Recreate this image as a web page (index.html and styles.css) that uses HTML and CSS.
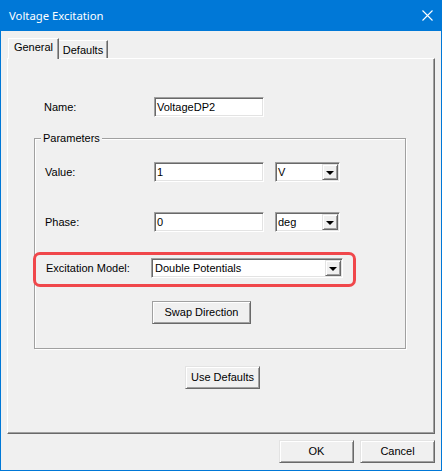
FILE: index.html
```html
<!DOCTYPE html>
<html>
<head>
<meta charset="utf-8">
<link rel="stylesheet" href="styles.css">
</head>
<body>
<div class="window">
  <div class="titlebar">
    <span class="title">Voltage Excitation</span>
    <svg class="close" width="11" height="11" viewBox="0 0 11 11"><path d="M0.5 0.5 L10.5 10.5 M10.5 0.5 L0.5 10.5" stroke="#fff" stroke-width="1.1" fill="none"/></svg>
  </div>
  <div class="content">
    <div class="tabs">
      <div class="tab active">General</div>
      <div class="tab">Defaults</div>
    </div>
    <div class="panel">
      <div class="row name-row">
        <span class="label">Name:</span>
        <div class="field">VoltageDP2</div>
      </div>
      <div class="group">
        <div class="group-title">Parameters</div>
        <div class="row value-row">
          <span class="label">Value:</span>
          <div class="field">1</div>
          <div class="combo unit"><span class="combo-text">V</span><span class="drop"><span class="arrow"></span></span></div>
        </div>
        <div class="row phase-row">
          <span class="label">Phase:</span>
          <div class="field">0</div>
          <div class="combo unit"><span class="combo-text">deg</span><span class="drop"><span class="arrow"></span></span></div>
        </div>
        <div class="highlight">
          <span class="label">Excitation Model:</span>
          <div class="combo model"><span class="combo-text">Double Potentials</span><span class="drop"><span class="arrow"></span></span></div>
        </div>
        <div class="btn swap">Swap Direction</div>
      </div>
      <div class="btn use-defaults">Use Defaults</div>
    </div>
    <div class="footer">
      <div class="btn">OK</div>
      <div class="btn">Cancel</div>
    </div>
  </div>
</div>
</body>
</html>
```
FILE: styles.css
```css
body {
  margin: 0;
  background: #fff;
  font-family: "Liberation Sans", Arial, sans-serif;
  font-size: 11px;
  color: #000;
}
.window {
  width: 442px;
  height: 471px;
  box-sizing: border-box;
  border: 1px solid #0078d7;
  border-top: 0;
  background: #f0f0f0;
}
.titlebar {
  height: 31px;
  background: #0078d7;
  color: #fff;
  display: flex;
  align-items: center;
  justify-content: space-between;
  padding: 0 8px 0 8px;
  font-family: "Noto Sans", "Liberation Sans", sans-serif;
  font-size: 11.3px;
}
.title { line-height: 16px; }
.close { display: block; }
.tabs {
  display: flex;
  align-items: flex-end;
  height: 20px;
  margin: 7px 0 0 7px;
}
.tab {
  box-sizing: border-box;
  background: #f0f0f0;
  text-align: center;
  border-top: 1px solid #fff;
  border-right: 1px solid #696969;
  box-shadow: inset -1px 0 0 #a0a0a0;
  width: 49px;
  height: 18px;
  padding-top: 1px;
  line-height: 16px;
}
.tab.active {
  position: relative;
  z-index: 1;
  width: 51px;
  height: 21px;
  margin-bottom: -1px;
  border-left: 1px solid #fff;
  padding-top: 0;
  line-height: 17px;
}
.panel {
  box-sizing: border-box;
  height: 376px;
  margin: 0 6px;
  border: 1px solid #696969;
  border-left-color: #fff;
  border-top-color: #fff;
  box-shadow: inset -1px -1px 0 #a0a0a0;
  display: flex;
  flex-direction: column;
  align-items: flex-start;
}
.row {
  display: flex;
  align-items: center;
}
.label { line-height: 14px; }
.name-row {
  margin: 38px 0 0 36px;
}
.name-row .label { width: 110px; }
.field {
  box-sizing: border-box;
  width: 110px;
  height: 20px;
  background: #fff;
  border: 1px solid;
  border-color: #a0a0a0 #fff #fff #a0a0a0;
  box-shadow: inset 1px 1px 0 #696969, inset -1px -1px 0 #e3e3e3;
  padding: 0 2px 0 2px;
  line-height: 18px;
}
.group {
  box-sizing: border-box;
  width: 372px;
  margin: 21px 0 0 26px;
  border: 1px solid #a0a0a0;
  box-shadow: 1px 1px 0 #fff, inset 1px 1px 0 #fff;
  padding: 0 0 24px 10px;
  display: flex;
  flex-direction: column;
  align-items: flex-start;
}
.group-title {
  margin: -7px 0 0 -4px;
  padding: 0 2px;
  background: #f0f0f0;
  line-height: 13px;
}
.value-row { margin-top: 17px; }
.phase-row { margin-top: 30px; }
.value-row .label, .phase-row .label { width: 109px; }
.combo {
  box-sizing: border-box;
  height: 20px;
  background: #fff;
  border: 1px solid;
  border-color: #a0a0a0 #fff #fff #a0a0a0;
  box-shadow: inset 1px 1px 0 #696969, inset -1px -1px 0 #e3e3e3;
  padding: 1px 1px 1px 2px;
  display: flex;
  align-items: center;
}
.combo.unit {
  width: 65px;
  margin-left: 11px;
}
.combo-text {
  flex: 1;
  line-height: 16px;
}
.drop {
  box-sizing: border-box;
  width: 16px;
  height: 16px;
  background: #f0f0f0;
  border: 1px solid;
  border-color: #e3e3e3 #696969 #696969 #e3e3e3;
  box-shadow: inset 1px 1px 0 #fff, inset -1px -1px 0 #a0a0a0;
  display: flex;
  align-items: center;
  justify-content: center;
}
.arrow {
  width: 0;
  height: 0;
  border-left: 4px solid transparent;
  border-right: 4px solid transparent;
  border-top: 4px solid #000;
  margin-top: 1px;
}
.highlight {
  box-sizing: border-box;
  width: 323px;
  height: 35px;
  margin: 20px 0 0 -12px;
  border: 3px solid #f0474b;
  border-radius: 7px;
  padding: 3px 0 6px 10px;
  display: flex;
  align-items: center;
}
.highlight .label { width: 105px; }
.combo.model {
  width: 192px;
  padding-left: 3px;
}
.btn {
  box-sizing: border-box;
  height: 23px;
  width: 75px;
  background: #f0f0f0;
  border: 1px solid;
  border-color: #e3e3e3 #696969 #696969 #e3e3e3;
  box-shadow: inset 1px 1px 0 #fff, inset -1px -1px 0 #a0a0a0;
  text-align: center;
  line-height: 21px;
}
.btn.swap {
  width: 99px;
  margin: 14px 0 0 107px;
  border-color: #a0a0a0 #696969 #696969 #a0a0a0;
}
.btn.use-defaults {
  margin: 17px 0 0 177px;
}
.footer {
  display: flex;
  justify-content: flex-end;
  gap: 6px;
  margin-top: 6px;
  padding-right: 6px;
}
```
